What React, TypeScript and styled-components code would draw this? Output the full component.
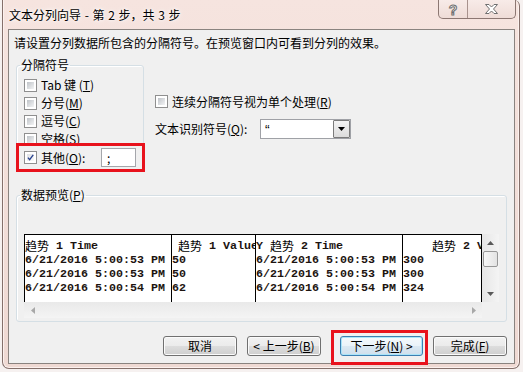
import styled, { createGlobalStyle } from 'styled-components';

const GlobalStyle = createGlobalStyle`
  html, body { margin: 0; padding: 0; }
  body {
    background: #f6f1f0;
    font-family: "Noto Sans CJK SC", "Liberation Sans", sans-serif;
    font-size: 12px;
    color: #000;
  }
`;

const Screen = styled.div`
  position: relative;
  width: 523px;
  height: 372px;
  overflow: hidden;
`;

const Window = styled.div`
  margin-left: 2px;
  width: 518px;
  height: 369px;
  box-sizing: border-box;
  border: 1px solid #85706b;
  border-top: none;
  border-radius: 0 6px 7px 7px;
  background: linear-gradient(#f6e4df, #efd9d3);
  box-shadow: inset 1px 0 #fcf1ee, inset -1px 0 #fcf1ee, inset 0 -1px #fcf1ee;
  padding: 0 4px 4px 5px;
  display: flex;
  flex-direction: column;
`;

const TitleBar = styled.div`
  height: 29px;
  flex: none;
  display: flex;
  align-items: flex-start;
`;

const Title = styled.div`
  margin: 8px 0 0 1px;
  line-height: 14px;
  word-spacing: 1px;
  text-shadow: 0 0 6px #fff, 0 0 3px #fff;
`;

const TitleButtons = styled.div`
  margin: 0 -1px 0 auto;
  display: flex;
  height: 19px;
  border: 1px solid #8c7772;
  border-top: none;
  border-radius: 0 0 5px 5px;
  background: linear-gradient(#f8ebe8, #efdcd7);
  box-sizing: border-box;
  overflow: hidden;
`;

const TitleButton = styled.div<{ $w: number }>`
  width: ${(p) => p.$w}px;
  display: flex;
  align-items: center;
  justify-content: center;
  & + & {
    border-left: 1px solid #a8928d;
  }
`;

const HelpGlyph = styled.span`
  font-family: "Liberation Sans", sans-serif;
  font-weight: bold;
  font-size: 14px;
  line-height: 14px;
  color: #fff;
  -webkit-text-stroke: 1px #6f6f6f;
  margin-top: 1px;
`;

const Client = styled.div`
  flex: 1;
  border: 1px solid #8a837f;
  background: #f0f0f0;
  padding: 6px 7px 7px 7px;
  display: flex;
  flex-direction: column;
`;

const Intro = styled.div`
  margin-left: -2px;
  line-height: 14px;
`;

const OptionsRow = styled.div`
  margin-top: 8px;
  display: flex;
  align-items: flex-start;
`;

const Group = styled.fieldset<{ $w?: number }>`
  margin: 0;
  ${(p) => (p.$w ? `width: ${p.$w}px;` : '')}
  box-sizing: border-box;
  border: 1px solid #d5dfe5;
  border-radius: 3px;
  box-shadow: inset 1px 1px #fff;
  min-width: 0;
`;

const DelimGroup = styled(Group)`
  padding: 0 7px 4px 7px;
`;

const PreviewGroup = styled(Group)`
  margin-top: 16px;
  padding: 32px 7px 3px 7px;
`;

const Legend = styled.legend`
  margin-left: -4px;
  padding: 0 1px;
  line-height: 14px;
`;

const CheckRow = styled.div<{ $h?: number }>`
  height: ${(p) => p.$h ?? 18}px;
  display: flex;
  align-items: center;
  gap: 4px;
  &:first-of-type {
    margin-top: 4px;
  }
`;

const Label = styled.span`
  line-height: 14px;
  white-space: nowrap;
`;

const Box = styled.span<{ $checked?: boolean }>`
  flex: none;
  width: 13px;
  height: 13px;
  box-sizing: border-box;
  border: 1px solid #8f8f8f;
  padding: 2px;
  background: ${(p) =>
    p.$checked
      ? 'linear-gradient(135deg, #dde0e4, #fafafa) content-box, #fff'
      : 'linear-gradient(135deg, #bfc3c8, #f3f4f5) content-box, #fff'};
  display: flex;
  align-items: center;
  justify-content: center;
  overflow: visible;
`;

const SmallInput = styled.div`
  margin-left: auto;
  width: 35px;
  height: 19px;
  box-sizing: border-box;
  border: 1px solid #a4a6ab;
  background: #fff;
  padding-left: 5px;
  line-height: 17px;
`;

const RightColumn = styled.div`
  margin-left: 11px;
  padding-top: 37px;
  display: flex;
  flex-direction: column;
`;

const PlainRow = styled.div`
  height: 13px;
  display: flex;
  align-items: center;
  gap: 4px;
`;

const FieldRow = styled.div`
  margin-top: 11px;
  display: flex;
  align-items: center;
`;

const FieldLabel = styled.span`
  width: 105px;
  line-height: 14px;
  white-space: nowrap;
`;

const Select = styled.div`
  width: 91px;
  height: 20px;
  box-sizing: border-box;
  border: 1px solid #9fa1a6;
  background: #fff;
  display: flex;
  align-items: stretch;
`;

const SelectValue = styled.span`
  flex: 1;
  padding-left: 4px;
  line-height: 20px;
  font-family: "Liberation Sans", sans-serif;
  font-size: 14px;
`;

const SelectButton = styled.span`
  width: 17px;
  box-sizing: border-box;
  border: 1px solid #7b7b7b;
  border-radius: 1px;
  background: linear-gradient(#f4f4f4, #dcdcdc);
  display: flex;
  align-items: center;
  justify-content: center;
`;

const Grid = styled.div`
  display: grid;
  grid-template-columns: 1fr 17px;
  grid-template-rows: 68px 16px;
`;

const Table = styled.div`
  display: flex;
  background: #fff;
  border-top: 1px solid #000;
  border-right: 1px solid #000;
  overflow: hidden;
`;

const Column = styled.div<{ $w?: number }>`
  ${(p) => (p.$w ? `width: ${p.$w}px; flex: none;` : 'flex: 1;')}
  box-sizing: border-box;
  border-left: 1px solid #000;
  padding-top: 4px;
  overflow: hidden;
  font-family: "Liberation Mono", "Noto Sans CJK SC", monospace;
  font-weight: bold;
  font-size: 11.67px;
  color: #1c1410;
`;

const Cell = styled.div<{ $indent?: number }>`
  height: 14px;
  line-height: 14px;
  white-space: pre;
  padding-left: ${(p) => p.$indent ?? 0}px;
`;

const Cjk = styled.span`
  font-family: "Noto Sans CJK SC", sans-serif;
  font-weight: normal;
  font-size: 12px;
  line-height: 14px;
  vertical-align: top;
  color: #000;
`;

const VScroll = styled.div`
  background: linear-gradient(90deg, #e6e6e6, #f4f4f4);
  display: flex;
  flex-direction: column;
`;

const HScroll = styled.div`
  background: linear-gradient(#e9e9e9, #f4f4f4);
  display: flex;
  justify-content: space-between;
`;

const Corner = styled.div`
  background: #f0f0f0;
`;

const ArrowButton = styled.div`
  width: 17px;
  height: 17px;
  flex: none;
  display: flex;
  align-items: center;
  justify-content: center;
`;

const Thumb = styled.div`
  margin: 0 1px;
  height: 16px;
  border: 1px solid #979797;
  border-radius: 2px;
  background: linear-gradient(90deg, #f7f7f7, #e3e3e3);
  box-sizing: border-box;
`;

const Spacer = styled.div`
  flex: 1;
`;

const ButtonRow = styled.div`
  margin-top: 14px;
  display: flex;
  justify-content: flex-end;
`;

const Button = styled.div<{ $gap?: number; $w?: number; $default?: boolean }>`
  margin-left: ${(p) => p.$gap ?? 10}px;
  width: ${(p) => p.$w ?? 74}px;
  height: 20px;
  box-sizing: border-box;
  border: 1px solid ${(p) => (p.$default ? '#3c7fb1' : '#707070')};
  border-radius: 3px;
  background: ${(p) =>
    p.$default
      ? 'linear-gradient(#f4f9fc 0%, #eaf3f9 50%, #dbe9f3 50%, #cfdfec 100%)'
      : 'linear-gradient(#f2f2f2 0%, #ebebeb 50%, #dddddd 50%, #cfcfcf 100%)'};
  box-shadow: inset 0 0 0 1px ${(p) => (p.$default ? '#a9e4f9' : '#fbfbfb')};
  display: flex;
  align-items: center;
  justify-content: center;
  line-height: 14px;
  white-space: pre;
`;

const Highlight = styled.div<{ $x: number; $y: number; $w: number; $h: number }>`
  position: absolute;
  left: ${(p) => p.$x}px;
  top: ${(p) => p.$y}px;
  width: ${(p) => p.$w}px;
  height: ${(p) => p.$h}px;
  box-sizing: border-box;
  border: 3px solid #e8121c;
  pointer-events: none;
`;

function Tick() {
  return (
    <svg width="9" height="9" viewBox="0 0 9 9">
      <path d="M1.2 4.6 L3.4 7.2 L8 1.2" stroke="#26408e" strokeWidth="1.7" fill="none" />
    </svg>
  );
}

function CloseGlyph() {
  return (
    <svg width="13" height="10" viewBox="0 0 13 10">
      <path
        d="M0.5 0.5 H4 L6.5 3 L9 0.5 H12.5 L8.5 5 L12.5 9.5 H9 L6.5 7 L4 9.5 H0.5 L4.5 5 Z"
        fill="#fff"
        stroke="#6f6f6f"
        strokeWidth="1"
      />
    </svg>
  );
}

function Arrow({ dir, color }: { dir: 'up' | 'down' | 'left' | 'right'; color: string }) {
  const pts = {
    up: '0,4 7,4 3.5,0',
    down: '0,0 7,0 3.5,4',
    left: '4,0 4,7 0,3.5',
    right: '0,0 0,7 4,3.5',
  }[dir];
  const vert = dir === 'up' || dir === 'down';
  return (
    <svg width={vert ? 7 : 4} height={vert ? 4 : 7}>
      <polygon points={pts} fill={color} />
    </svg>
  );
}

function Check({ label, checked }: { label: React.ReactNode; checked?: boolean }) {
  return (
    <>
      <Box $checked={checked}>{checked && <Tick />}</Box>
      <Label>{label}</Label>
    </>
  );
}

const dates = ['6/21/2016 5:00:53 PM', '6/21/2016 5:00:53 PM', '6/21/2016 5:00:54 PM'];

export default function App() {
  return (
    <Screen>
      <GlobalStyle />
      <Window>
        <TitleBar>
          <Title>文本分列向导 - 第 2 步，共 3 步</Title>
          <TitleButtons>
            <TitleButton $w={28}>
              <HelpGlyph>?</HelpGlyph>
            </TitleButton>
            <TitleButton $w={47}>
              <CloseGlyph />
            </TitleButton>
          </TitleButtons>
        </TitleBar>
        <Client>
          <Intro>请设置分列数据所包含的分隔符号。在预览窗口内可看到分列的效果。</Intro>
          <OptionsRow>
            <DelimGroup $w={128}>
              <Legend>分隔符号</Legend>
              <CheckRow>
                <Check label={<>Tab 键 (<u>T</u>)</>} />
              </CheckRow>
              <CheckRow>
                <Check label={<>分号(<u>M</u>)</>} />
              </CheckRow>
              <CheckRow>
                <Check label={<>逗号(<u>C</u>)</>} />
              </CheckRow>
              <CheckRow>
                <Check label={<>空格(<u>S</u>)</>} />
              </CheckRow>
              <CheckRow $h={19}>
                <Check checked label={<>其他(<u>O</u>):</>} />
                <SmallInput>;</SmallInput>
              </CheckRow>
            </DelimGroup>
            <RightColumn>
              <PlainRow>
                <Check label={<>连续分隔符号视为单个处理(<u>R</u>)</>} />
              </PlainRow>
              <FieldRow>
                <FieldLabel>
                  文本识别符号(<u>Q</u>):
                </FieldLabel>
                <Select>
                  <SelectValue>“</SelectValue>
                  <SelectButton>
                    <Arrow dir="down" color="#000" />
                  </SelectButton>
                </Select>
              </FieldRow>
            </RightColumn>
          </OptionsRow>
          <PreviewGroup>
            <Legend>
              数据预览(<u>P</u>)
            </Legend>
            <Grid>
              <Table>
                <Column $w={147}>
                  <Cell>
                    <Cjk>趋势</Cjk> 1 Time
                  </Cell>
                  {dates.map((d, i) => (
                    <Cell key={i}>{d}</Cell>
                  ))}
                </Column>
                <Column $w={84}>
                  <Cell $indent={6}>
                    <Cjk>趋势</Cjk> 1 Value
                  </Cell>
                  <Cell>50</Cell>
                  <Cell>50</Cell>
                  <Cell>62</Cell>
                </Column>
                <Column $w={147}>
                  <Cell>
                    Y <Cjk>趋势</Cjk> 2 Time
                  </Cell>
                  {dates.map((d, i) => (
                    <Cell key={i}>{d}</Cell>
                  ))}
                </Column>
                <Column>
                  <Cell $indent={29}>
                    <Cjk>趋势</Cjk> 2 ValueY
                  </Cell>
                  <Cell>300</Cell>
                  <Cell>300</Cell>
                  <Cell>324</Cell>
                </Column>
              </Table>
              <VScroll>
                <ArrowButton>
                  <Arrow dir="up" color="#5a5a5a" />
                </ArrowButton>
                <Thumb />
                <Spacer />
                <ArrowButton>
                  <Arrow dir="down" color="#5a5a5a" />
                </ArrowButton>
              </VScroll>
              <HScroll>
                <ArrowButton>
                  <Arrow dir="left" color="#a8a8a8" />
                </ArrowButton>
                <ArrowButton>
                  <Arrow dir="right" color="#a8a8a8" />
                </ArrowButton>
              </HScroll>
              <Corner />
            </Grid>
          </PreviewGroup>
          <ButtonRow>
            <Button $gap={0}>取消</Button>
            <Button>
              {'< 上一步('}
              <u>B</u>)
            </Button>
            <Button $gap={19} $w={83} $default>
              下一步(<u>N</u>){' >'}
            </Button>
            <Button>
              完成(<u>F</u>)
            </Button>
          </ButtonRow>
        </Client>
      </Window>
      <Highlight $x={16} $y={143} $w={129} $h={29} />
      <Highlight $x={331} $y={330} $w={97} $h={35} />
    </Screen>
  );
}
